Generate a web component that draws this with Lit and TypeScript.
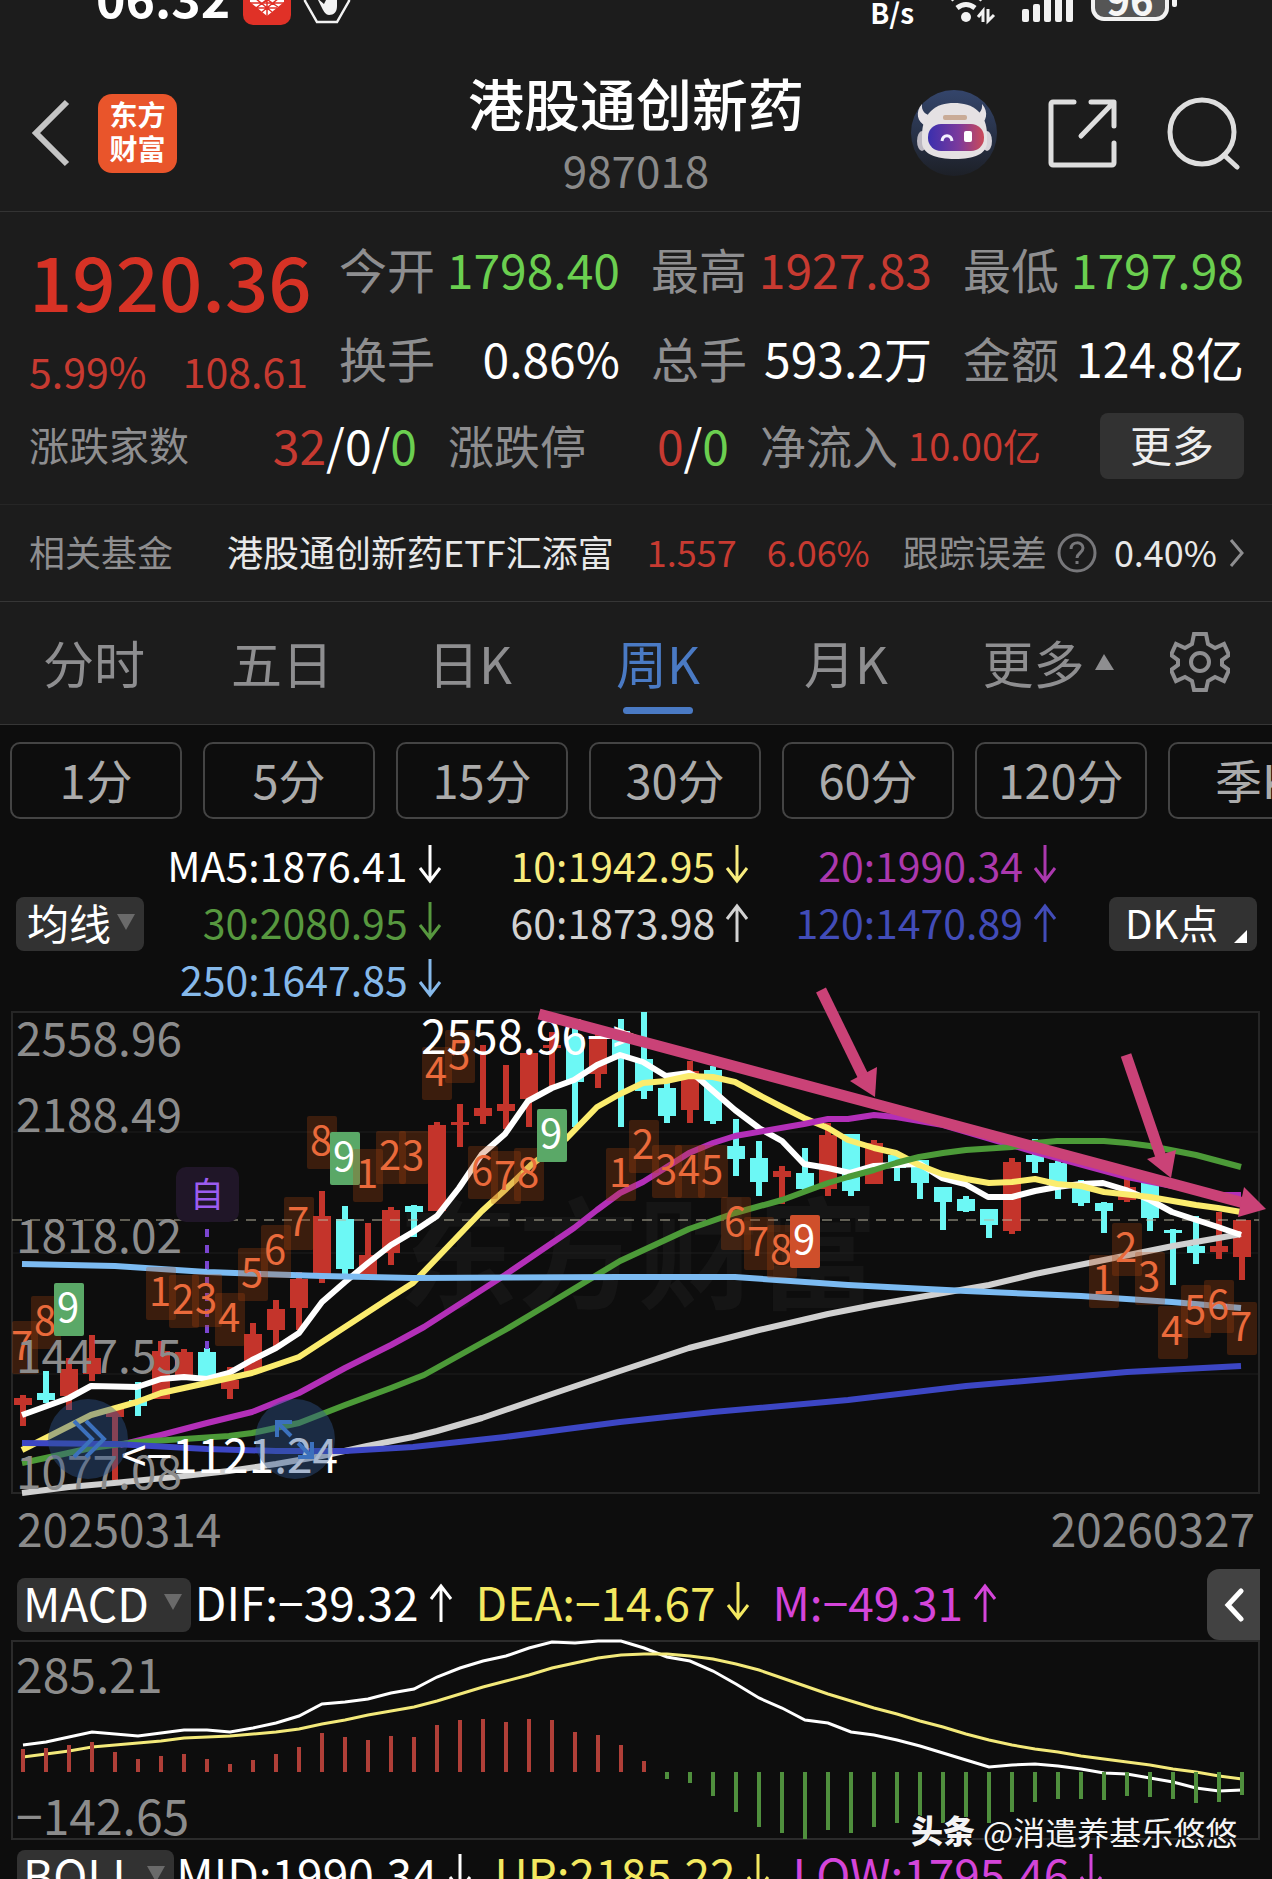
import { LitElement, html, svg, css } from "lit";
import { customElement, property } from "lit/decorators.js";

const fontStack = css`"Noto Sans CJK SC", "Noto Sans", sans-serif`;

type Candle = [high: number, top: number, bottom: number, low: number, dir: "u" | "d"];

const CANDLES: Candle[] = [
  [395, 398, 405, 426, "u"], [371, 393, 400, 403, "d"], [358, 369, 396, 410, "u"], [335, 358, 374, 381, "u"],
  [408, 408, 417, 480, "u"], [382, 400, 406, 416, "d"], [341, 351, 399, 399, "u"], [349, 352, 378, 378, "u"],
  [348, 352, 376, 376, "d"], [367, 380, 389, 399, "u"], [323, 334, 373, 373, "u"], [300, 309, 330, 347, "u"],
  [272, 279, 308, 330, "u"], [191, 216, 276, 283, "u"], [206, 219, 269, 276, "d"], [223, 255, 275, 275, "u"],
  [207, 210, 253, 265, "u"], [205, 206, 212, 237, "d"], [122, 125, 211, 211, "u"], [104, 122, 125, 147, "u"],
  [45, 108, 116, 124, "u"], [65, 104, 111, 129, "u"], [50, 53, 99, 127, "u"], [32, 45, 48, 87, "u"],
  [28, 37, 82, 127, "d"], [33, 37, 74, 88, "u"], [19, 31, 57, 127, "d"], [12, 59, 91, 99, "d"],
  [75, 88, 116, 123, "d"], [61, 71, 110, 123, "u"], [66, 70, 121, 124, "d"], [119, 146, 159, 176, "d"],
  [141, 158, 182, 196, "d"], [166, 171, 177, 204, "u"], [148, 173, 189, 190, "d"], [123, 135, 189, 196, "u"],
  [134, 134, 191, 196, "d"], [140, 143, 184, 184, "u"], [152, 155, 168, 181, "d"], [160, 160, 183, 199, "d"],
  [187, 187, 202, 230, "d"], [196, 199, 211, 212, "d"], [209, 209, 225, 238, "d"], [158, 162, 231, 234, "u"],
  [139, 155, 162, 173, "d"], [161, 163, 187, 199, "d"], [180, 187, 203, 206, "d"], [202, 203, 211, 233, "d"],
  [175, 187, 200, 202, "u"], [182, 182, 218, 231, "d"], [229, 230, 233, 285, "d"], [216, 246, 253, 264, "d"],
  [212, 246, 252, 259, "u"], [220, 220, 257, 280, "u"],
];

const FIRST_X = 23;
const STEP = 23;
const cx = (i: number) => FIRST_X + STEP * i;

const AVERAGES: { name: string; color: string; points: string }[] = [
  { name: "ma60", color: "#d0d0d0", points: "22,493 69,487 114,483 184,476 229,471 276,464 322,456 367,446 413,437 437,431 482,418 552,394 620,371 689,348 759,330 828,314 874,305 943,293 989,285 1035,274 1104,260 1173,246 1241,234" },
  { name: "ma5", color: "#ffffff", points: "22,415 69,398 91,386 137,387 161,379 184,377 207,379 229,373 252,360 276,348 299,333 322,302 345,282 368,263 391,245 413,232 437,216 459,188 482,154 505,134 528,101 552,88 574,80 597,65 620,55 643,62 666,76 689,73 697,77 735,110 759,128 782,141 804,164 828,168 850,173 874,166 895,165 920,164 942,178 965,184 988,197 1012,197 1035,191 1057,187 1081,184 1103,183 1126,190 1150,200 1172,212 1218,227 1241,235" },
  { name: "ma10", color: "#fbec6e", points: "22,450 91,415 137,402 161,393 207,383 252,373 299,357 345,327 391,297 413,283 437,258 482,211 505,190 531,165 567,138 597,107 620,94 643,83 666,81 689,76 713,77 735,82 759,95 782,107 804,118 828,128 848,140 874,148 896,153 919,165 942,174 966,179 989,183 1012,182 1035,179 1057,184 1081,186 1104,192 1150,197 1173,201 1196,205 1218,208 1241,212" },
  { name: "ma20", color: "#b32fb8", points: "120,445 161,435 207,423 252,412 299,393 345,368 391,345 424,327 505,275 574,228 597,210 620,193 643,182 689,153 713,143 735,136 804,124 828,119 848,119 874,115 896,117 943,125 1035,152 1127,177 1218,195 1241,195" },
  { name: "ma30", color: "#4c9a38", points: "22,463 50,457 91,448 137,442 184,439 229,436 252,433 299,423 345,405 391,388 424,375 505,330 552,302 620,261 689,229 735,213 782,200 828,183 848,177 874,170 896,163 919,157 943,153 966,150 1012,147 1035,143 1057,141 1104,141 1127,143 1150,146 1196,155 1241,167" },
  { name: "ma250", color: "#7cbbf2", points: "22,264 115,266 207,272 322,276 413,278 620,277 735,277 848,285 966,291 1081,296 1172,302 1241,308" },
  { name: "ma120", color: "#3c46c4", points: "22,443 115,444 207,449 276,451 345,451 413,447 505,437 620,422 713,412 848,400 966,386 1127,372 1241,366" },
];

/* Sequence counters: candle index, top of the tag, digit, and the tag's kind. */
const COUNTS: [number, number, string, string?][] = [
  [0, 321, "7"], [1, 296, "8"], [2, 283, "9", "buy"], [6, 267, "1"], [7, 275, "2"], [8, 274, "3"], [9, 293, "4"],
  [10, 248, "5"], [11, 225, "6"], [12, 197, "7"], [13, 116, "8"], [14, 132, "9", "buy"], [15, 149, "1"],
  [16, 131, "2"], [17, 131, "3"], [18, 47, "4"], [19, 30, "5"], [20, 146, "6"], [21, 151, "7"], [22, 148, "8"],
  [23, 109, "9", "buy"], [26, 148, "1"], [27, 120, "2"], [28, 145, "3"], [29, 145, "4"], [30, 145, "5"],
  [31, 197, "6"], [32, 217, "7"], [33, 225, "8"], [34, 215, "9", "sell"], [47, 255, "1"], [48, 223, "2"],
  [49, 252, "3"], [50, 306, "4"], [51, 285, "5"], [52, 280, "6"], [53, 302, "7"],
];

const SCALE: [string, number][] = [["2558.96", 56], ["2188.49", 132], ["1818.02", 253], ["1447.55", 373], ["1077.08", 489]];

@customElement("price-chart")
export class PriceChart extends LitElement {
  static styles = css`
    :host { display: block; }
    svg { display: block; width: 100%; overflow: visible; font-family: ${fontStack}; }
    .frame { fill: none; stroke: #262626; stroke-width: 2; }
    .rule { stroke: #1e1e1e; stroke-width: 1; }
    .last { stroke: #b8b39e; stroke-width: 1; stroke-dasharray: 10 8; }
    .mark { fill: #151515; font-size: 120px; font-weight: 700; }
    .u { fill: #c4342b; }
    .d { fill: #6cf8f5; }
    .avg { fill: none; stroke-width: 6; stroke-linejoin: round; }
    .tag { fill: #b4480f; fill-opacity: 0.28; }
    .digit { fill: #ea6a3b; font-size: 40px; text-anchor: middle; }
    .tag.buy { fill: #5aa867; fill-opacity: 1; }
    .tag.sell { fill: #cf4f2b; fill-opacity: 1; }
    .digit.buy, .digit.sell { fill: #fff; }
    .note { fill: #201628; }
    .note-text { fill: #9c5cf0; font-size: 34px; text-anchor: middle; }
    .note-line { stroke: #7a45cf; stroke-width: 4; stroke-dasharray: 8 8; }
    .scale { fill: #8c8c8c; font-size: 46px; }
    .peak { fill: #fff; font-size: 46px; }
    .pad { fill: #2f5590; fill-opacity: 0.42; }
    .glyph { fill: none; stroke: #3c71bd; stroke-width: 4; }
    .trend { stroke: #ca4277; stroke-width: 11; }
    .head { fill: #ca4277; }
  `;

  render() {
    return html`<svg viewBox="0 6 1272 492" role="img" aria-label="周K">
      <text class="mark" x="398" y="300">东方财富</text>
      <rect class="frame" x="12" y="12" width="1247" height="481"></rect>
      ${[132, 253, 374].map((y) => svg`<line class="rule" x1="13" x2="1258" y1=${y} y2=${y}></line>`)}
      ${CANDLES.map(([h, t, b, l, dir], i) => svg`
        <rect class=${dir} x=${cx(i) - 3} y=${h} width="6" height=${l - h}></rect>
        <rect class=${dir} x=${cx(i) - 9} y=${t} width="18" height=${b - t}></rect>`)}
      <line class="last" x1="12" x2="1259" y1="220" y2="220"></line>
      <line class="note-line" x1="207" x2="207" y1="229" y2="349"></line>
      <rect class="note" x="176" y="167" width="63" height="55" rx="10"></rect>
      <text class="note-text" x="207" y="207">自</text>
      ${AVERAGES.map((a) => svg`<polyline class="avg" stroke=${a.color} points=${a.points}></polyline>`)}
      ${COUNTS.map(([i, y, digit, kind = ""]) => svg`
        <rect class="tag ${kind}" x=${Math.max(cx(i) - 15, 12)} y=${y} width=${i ? 30 : 26} height="53" rx="2"></rect>
        <text class="digit ${kind}" x=${cx(i) - 1} y=${y + 39}>${digit}</text>`)}
      ${SCALE.map(([text, y]) => svg`<text class="scale" x="16" y=${y}>${text}</text>`)}
      <text class="peak" x="421" y="54">2558.96−&gt;</text>
      <text class="peak" x="121" y="473">&lt;−1121.24</text>
      <circle class="pad" cx="88" cy="439" r="40"></circle>
      <path class="glyph" d="M74 421l18 18-18 18M86 421l18 18-18 18"></path>
      <circle class="pad" cx="295" cy="439" r="40"></circle>
      <path class="glyph" d="M277 437v-15h15M277 422l14 14M298 457h14v-15M312 457l-14-14"></path>
      <line class="trend" x1="539" y1="14" x2="1244" y2="203"></line>
      <polygon class="head" points="1244,187 1266,209 1238,217"></polygon>
      <line class="trend" x1="821" y1="-10" x2="864" y2="78"></line>
      <polygon class="head" points="877,67 875,97 850,81"></polygon>
      <line class="trend" x1="1126" y1="55" x2="1161" y2="157"></line>
      <polygon class="head" points="1176,150 1171,178 1147,159"></polygon>
    </svg>`;
  }
}

const BARS = [
  109, 108, 105, 102, 112, 119, 116, 114, 119, 124, 120, 114, 107, 93, 97, 100, 96, 97, 85, 80, 79, 82, 79, 80, 92, 95, 105,
  121, 139, 143, 156, 172, 187, 193, 199, 190, 193, 187, 183, 180, 183, 177, 183, 172, 162, 159, 159, 160, 156, 157, 159, 163, 162, 155,
];
const DIF = [
  105, 102, 97, 92, 94, 96, 93, 90, 90, 92, 88, 83, 76, 64, 62, 59, 53, 49, 37, 28, 21, 16, 8, 2, 3, 1, 1,
  8, 17, 21, 31, 44, 58, 68, 80, 83, 92, 95, 100, 106, 113, 120, 127, 125, 124, 126, 129, 133, 134, 138, 142, 148, 151, 150,
];
const DEA = [
  117, 114, 111, 107, 105, 103, 101, 98, 97, 96, 94, 92, 89, 84, 80, 75, 71, 67, 61, 54, 47, 41, 35, 28, 23, 18, 15,
  14, 14, 16, 19, 24, 30, 38, 46, 54, 61, 68, 74, 81, 87, 94, 100, 105, 109, 112, 116, 119, 122, 125, 129, 132, 136, 139,
];
const ZERO = 132;

@customElement("macd-chart")
export class MacdChart extends LitElement {
  static styles = css`
    :host { display: block; }
    svg { display: block; width: 100%; overflow: visible; font-family: ${fontStack}; }
    .frame { fill: none; stroke: #2b2b2b; stroke-width: 2; }
    .pos { fill: #b03f38; }
    .neg { fill: #4f8f3d; }
    .dif, .dea { fill: none; stroke-width: 3; }
    .dif { stroke: #fff; }
    .dea { stroke: #f3e97a; }
    .scale { fill: #8c8c8c; font-size: 48px; }
    .by { fill: #f4f4f4; font-size: 32px; paint-order: stroke; stroke: #0d0d0d; stroke-width: 2; }
    .strong { font-weight: 900; }
  `;

  render() {
    const path = (v: number[]) => v.map((y, i) => `${cx(i)},${y}`).join(" ");
    return html`<svg viewBox="0 0 1272 210" role="img" aria-label="MACD">
      <rect class="frame" x="12" y="1" width="1247" height="198"></rect>
      <text class="scale" x="16" y="53">285.21</text>
      <text class="scale" x="16" y="195">−142.65</text>
      <polyline class="dif" points=${path(DIF)}></polyline>
      <polyline class="dea" points=${path(DEA)}></polyline>
      ${BARS.map((y, i) => y < ZERO
        ? svg`<rect class="pos" x=${cx(i) - 2} y=${y} width="4" height=${ZERO - y}></rect>`
        : svg`<rect class="neg" x=${cx(i) - 2} y=${ZERO} width="4" height=${y - ZERO}></rect>`)}
      <text class="by strong" x="911" y="203">头条</text>
      <text class="by" x="983" y="205">@消遣养基乐悠悠</text>
    </svg>`;
  }
}

@customElement("trend-value")
export class TrendValue extends LitElement {
  @property() dir: "up" | "down" = "down";

  static styles = css`
    :host { display: inline-flex; align-items: center; gap: 9px; white-space: nowrap; }
    svg { flex: none; width: 26px; height: 40px; margin-top: 2px; fill: none; stroke: currentColor; stroke-width: 3; }
  `;

  render() {
    return html`<slot></slot><svg viewBox="0 0 26 40" aria-hidden="true">
      ${this.dir === "up" ? svg`<path d="M13 40V4M3 17L13 4l10 13"></path>` : svg`<path d="M13 0v36M3 23l10 13 10-13"></path>`}
    </svg>`;
  }
}

@customElement("app-root")
export class AppRoot extends LitElement {
  static styles = css`
    :host {
      display: block; height: 100vh; overflow: hidden; background: #0d0d0d; color: #fff;
      font-family: ${fontStack};
    }
    * { box-sizing: border-box; }
    button { font: inherit; color: inherit; background: none; border: 0; padding: 0; margin: 0; cursor: pointer; }
    a { color: inherit; text-decoration: none; }
    svg { display: block; flex: none; }
    .panel { background: #1c1c1c; }
    .red { color: #c73a31; }
    .green { color: #6bcf50; }
    .muted { color: #8e8e90; }

    .status { display: flex; justify-content: space-between; height: 46px; padding: 0 93px 0 96px; overflow: hidden; }
    .status-side { display: flex; align-items: flex-start; }
    .clock { font-size: 50px; font-weight: 700; line-height: 64px; margin-top: -36px; }
    .app-mark { margin: 0 12px 0 13px; }
    .rate { font-size: 28px; font-weight: 700; line-height: 24px; margin-right: 34px; }
    .wifi { margin-right: 26px; }
    .signal { margin-right: 18px; }

    .nav { display: grid; grid-template-columns: 1fr auto 1fr; align-items: center; padding: 17px 31px 8px; border-bottom: 1px solid #333; }
    .nav-left { display: flex; align-items: center; gap: 27px; }
    .nav-right { display: flex; align-items: center; justify-content: flex-end; gap: 50px; }
    .logo { display: grid; place-content: center; width: 79px; height: 79px; padding-bottom: 4px; border-radius: 14px; background: #e9552b; font-size: 28px; font-weight: 700; line-height: 34px; text-align: center; }
    .heading { text-align: center; }
    h1 { margin: 0; padding-top: 4px; font-size: 56px; font-weight: 500; line-height: 70px; }
    .code { font-size: 44px; line-height: 64px; padding-bottom: 2px; color: #8a8a8a; }

    .quote { padding: 12px 28px 14px 29px; }
    .figures { display: grid; grid-template-columns: 278fr repeat(3, 280fr); column-gap: 31px; grid-auto-rows: 89px; }
    .figures > div, .breadth > div { display: flex; align-items: center; justify-content: space-between; min-width: 0; white-space: nowrap; }
    .figures > div { padding-bottom: 2px; font-size: 48px; }
    .figures > .last-price { grid-row: span 2; flex-direction: column; align-items: stretch; justify-content: flex-start; }
    .price { font-size: 76px; font-weight: 500; line-height: 110px; color: #d63225; text-align: center; }
    .change { display: flex; justify-content: space-between; font-size: 41px; line-height: 72px; }
    .breadth { display: grid; grid-template-columns: 388fr 281fr 281fr 172fr; column-gap: 31px; height: 88px; }
    .breadth > div { padding-bottom: 4px; font-size: 48px; }
    .breadth .label { font-size: 46px; }
    .breadth .small { font-size: 40px; }
    .breadth .tiny { font-size: 38px; }
    .breadth > .more-cell { justify-content: flex-end; padding-bottom: 0; }
    .more { width: 144px; height: 66px; padding-bottom: 4px; line-height: 62px; border-radius: 8px; background: #323232; color: #eee; font-size: 42px; }

    .fund { display: flex; align-items: center; justify-content: space-between; height: 98px; padding: 0 28px 4px 29px; border-top: 1px solid #262626; border-bottom: 1px solid #363636; font-size: 36px; white-space: nowrap; }
    .fund > span { display: flex; align-items: center; }
    .fund-name { gap: 54px; color: #e8e8e8; }
    .fund-price { gap: 30px; }
    .help { margin: 3px 17px 0 10px; }
    .error { color: #e8e8e8; }
    .fund-more { margin: 3px 0 0 12px; }

    .tabs { display: grid; grid-template-columns: repeat(6, 188fr) 144fr; height: 123px; border-bottom: 1px solid #363636; font-size: 51px; color: #8e8e90; }
    .tab { position: relative; line-height: 116px; padding-bottom: 2px; display: flex; justify-content: center; align-items: center; gap: 10px; white-space: nowrap; }
    .tab.more-tab { padding-left: 28px; }
    .tab.on { color: #4a7ac4; }
    .tab.on::after { content: ""; position: absolute; left: 50%; bottom: 10px; width: 70px; height: 7px; margin-left: -35px; border-radius: 4px; background: #4a7ac4; }

    .periods { display: flex; gap: 21px; padding: 17px 0 0 10px; overflow: hidden; }
    .period { flex: none; width: 172px; height: 77px; padding-bottom: 4px; border: 2px solid #444; border-radius: 10px; font-size: 47px; line-height: 68px; color: #ababab; }
    .period.wide { text-align: left; padding-left: 45px; }

    .legend { display: grid; grid-template-columns: 128px 1fr 148px; align-items: center; padding: 16px 15px 0 16px; }
    .values { display: grid; grid-template-columns: 298fr 307fr 307fr; grid-auto-rows: 57px; justify-items: end; padding-right: 51px; font-size: 41px; }
    .chip { display: flex; align-items: center; height: 54px; border-radius: 8px; background: #323232; font-size: 42px; line-height: 54px; white-space: nowrap; }
    .legend .chip { margin-top: 6px; padding-bottom: 3px; }
    .chip-avg { padding-left: 11px; gap: 6px; }
    .chip-dk { padding-left: 16px; font-size: 40px; }
    .chip-dk svg { align-self: flex-end; margin: 0 0 5px 16px; }
    .c5 { color: #fff; } .c10 { color: #f8ec7e; } .c20 { color: #ab38ae; }
    .c30 { color: #57983f; } .c60 { color: #d2d2d2; } .c120 { color: #424cb8; } .c250 { color: #86b9ea; }

    .dates { display: flex; justify-content: space-between; padding: 2px 17px 0; font-size: 46px; line-height: 54px; color: #8a8a8a; }
    .indicator { display: flex; align-items: center; height: 71px; margin-top: 15px; padding-left: 17px; font-size: 46px; white-space: nowrap; }
    .indicator .chip { padding: 0 9px 6px 6px; gap: 15px; margin-right: 4px; font-size: 46px; }
    .indicator .m { color: #d445da; }
    .indicator .y { color: #f3e860; }
    .run { display: flex; gap: 22px; padding-bottom: 8px; }
    .fold { display: grid; place-items: center; width: 53px; height: 71px; margin: 0 12px 0 auto; border-radius: 12px 0 0 12px; background: #424242; }
    .indicator.cut { height: 54px; margin-top: 0; }
    .indicator.cut .chip { gap: 10px; margin-right: 2px; }
  `;

  private tri(size: number) {
    return html`<svg width=${size} height="16" viewBox="0 0 18 16" aria-hidden="true"><path d="M0 0h18L9 16z" fill="#6a6a6a"></path></svg>`;
  }

  private figure(label: string, value: string, tone = "") {
    return html`<div><span class="muted">${label}</span><span class=${tone}>${value}</span></div>`;
  }

  render() {
    return html`
      <div class="panel">
        <div class="status">
          <div class="status-side">
            <span class="clock">06:32</span>
            <svg class="app-mark" width="48" height="31" viewBox="0 0 48 31" aria-hidden="true">
              <rect y="-17" width="48" height="42" rx="10" fill="#e03127"></rect>
              <path d="M7-2v4L24 16 41 2v-4z" fill="#fff"></path>
              <path d="M12-2l17 14M22-2l13 9M36-2L19 12M26-2L13 8M7 3h34M14 8h20M24-2v18" stroke="#e03127" stroke-width="1.5"></path>
            </svg>
            <svg width="48" height="31" viewBox="0 0 48 31" aria-hidden="true">
              <path d="M2-4V1l12 21h20L46 1v-5" fill="none" stroke="#f2f2f2" stroke-width="2.5"></path>
              <path d="M14-2l7 6 3-6h10v8c0 6-3 9-8 9-3 0-5-3-7-7z" fill="#f2f2f2"></path>
            </svg>
          </div>
          <div class="status-side">
            <span class="rate">B/s</span>
            <svg class="wifi" width="48" height="28" viewBox="0 0 48 28" aria-hidden="true">
              <path d="M3 0Q18-12 34 0" fill="none" stroke="#f2f2f2" stroke-width="4"></path>
              <path d="M9 8Q18 1 27 8" fill="none" stroke="#f2f2f2" stroke-width="5"></path>
              <circle cx="18" cy="17" r="5" fill="#f2f2f2"></circle>
              <path d="M35 22V11l-5 6M40 9v12l6-6" fill="none" stroke="#f2f2f2" stroke-width="3"></path>
            </svg>
            <svg class="signal" width="51" height="24" viewBox="0 0 51 24" fill="#f2f2f2" aria-hidden="true">
              <rect x="0" y="9" width="7" height="13" rx="2"></rect><rect x="11" y="4" width="7" height="18" rx="2"></rect>
              <rect x="22" y="-4" width="7" height="26" rx="2"></rect><rect x="33" y="-4" width="7" height="26" rx="2"></rect>
              <rect x="44" y="-4" width="7" height="26" rx="2"></rect>
            </svg>
            <svg width="88" height="24" viewBox="0 0 88 24" aria-label="96">
              <rect x="2" y="-24" width="74" height="43" rx="11" fill="#555" stroke="#f2f2f2" stroke-width="4"></rect>
              <rect x="81" y="-10" width="5" height="17" rx="2" fill="#f2f2f2"></rect>
              <text x="39" y="15" font-size="40" font-weight="700" fill="#f6f6f6" text-anchor="middle">96</text>
            </svg>
          </div>
        </div>

        <header class="nav">
          <div class="nav-left">
            <button aria-label="返回">
              <svg width="40" height="68" viewBox="0 0 40 68"><path d="M36 3L5 34l31 31" fill="none" stroke="#c4c4c4" stroke-width="6"></path></svg>
            </button>
            <div class="logo"><span>东方</span><span>财富</span></div>
          </div>
          <div class="heading">
            <h1>港股通创新药</h1>
            <div class="code">987018</div>
          </div>
          <div class="nav-right">
            <button aria-label="助手">
              <svg width="88" height="88" viewBox="0 0 88 88">
                <defs>
                  <linearGradient id="sky" x2="0" y2="1"><stop stop-color="#34456b"></stop><stop offset="1" stop-color="#1d2027"></stop></linearGradient>
                  <linearGradient id="visor"><stop stop-color="#3a2fae"></stop><stop offset=".55" stop-color="#7c3a9c"></stop><stop offset="1" stop-color="#cc4a58"></stop></linearGradient>
                </defs>
                <circle cx="44" cy="44" r="43" fill="url(#sky)"></circle>
                <path d="M12 15c-7 8-5 18 4 22l9-11c-8 2-14-3-13-11zM72 15c7 8 5 18-4 22l-9-11c8 2 14-3 13-11z" fill="#e6e2e6"></path>
                <ellipse cx="12" cy="52" rx="5" ry="10" fill="#bdb9c2"></ellipse><ellipse cx="77" cy="52" rx="5" ry="10" fill="#d6d2d8"></ellipse>
                <path d="M12 46c0-10 3-18 9-24 6-6 14-8 23-8s18 2 24 8c6 6 9 14 9 24v7c0 12-13 17-32 17S12 65 12 53z" fill="#e5e1e3"></path>
                <rect x="33" y="26" width="24" height="5" rx="2" fill="#c9ab97"></rect>
                <rect x="18" y="35" width="56" height="27" rx="13" fill="url(#visor)"></rect>
                <path d="M32 52c1-7 9-7 10 0" fill="none" stroke="#f4f0ff" stroke-width="3"></path>
                <rect x="54" y="42" width="8" height="11" rx="2" fill="#fff"></rect>
              </svg>
            </button>
            <button aria-label="分享">
              <svg width="69" height="69" viewBox="0 0 69 69" fill="none" stroke="#dedede" stroke-width="5" stroke-linecap="round" stroke-linejoin="round">
                <path d="M26 3H5a2 2 0 0 0-2 2v59a2 2 0 0 0 2 2h59a2 2 0 0 0 2-2V44M43 3h23v24M65 4L33 37"></path>
              </svg>
            </button>
            <button aria-label="搜索">
              <svg width="74" height="74" viewBox="0 0 74 74" fill="none" stroke="#dedede" stroke-width="5" stroke-linecap="round">
                <circle cx="35" cy="36" r="32"></circle><path d="M57 59l13 12"></path>
              </svg>
            </button>
          </div>
        </header>

        <section class="quote">
          <div class="figures">
            <div class="last-price">
              <span class="price">1920.36</span>
              <span class="change red"><span>5.99%</span><span>108.61</span></span>
            </div>
            ${this.figure("今开", "1798.40", "green")}
            ${this.figure("最高", "1927.83", "red")}
            ${this.figure("最低", "1797.98", "green")}
            ${this.figure("换手", "0.86%")}
            ${this.figure("总手", "593.2万")}
            ${this.figure("金额", "124.8亿")}
          </div>
          <div class="breadth">
            <div><span class="muted small">涨跌家数</span><span><span class="red">32</span>/0/<span class="green">0</span></span></div>
            <div><span class="muted label">涨跌停</span><span><span class="red">0</span>/<span class="green">0</span></span></div>
            <div><span class="muted label">净流入</span><span class="red tiny">10.00亿</span></div>
            <div class="more-cell"><button class="more">更多</button></div>
          </div>
        </section>

        <a class="fund" href="#fund">
          <span class="fund-name"><span class="muted">相关基金</span><span>港股通创新药ETF汇添富</span></span>
          <span class="fund-price red"><span>1.557</span><span>6.06%</span></span>
          <span>
            <span class="muted">跟踪误差</span>
            <svg class="help" width="40" height="40" viewBox="0 0 40 40" fill="none" stroke="#77777a" stroke-width="3" aria-hidden="true">
              <circle cx="20" cy="20" r="18"></circle><path d="M14 16c0-8 12-8 12-1 0 5-6 5-6 10M20 28v3"></path>
            </svg>
            <span class="error">0.40%</span>
            <svg class="fund-more" width="15" height="28" viewBox="0 0 15 28" fill="none" stroke="#8e8e90" stroke-width="3" aria-hidden="true"><path d="M2 1l11 13L2 27"></path></svg>
          </span>
        </a>

        <nav class="tabs">
          <button class="tab">分时</button>
          <button class="tab">五日</button>
          <button class="tab">日K</button>
          <button class="tab on">周K</button>
          <button class="tab">月K</button>
          <button class="tab more-tab">更多<svg width="19" height="16" viewBox="0 0 19 16"><path d="M0 16L9 0l10 16z" fill="#8e8e90"></path></svg></button>
          <button class="tab" aria-label="设置">
            <svg width="60" height="60" viewBox="0 0 60 60" fill="none" stroke="#8e8e90" stroke-width="4" stroke-linejoin="miter">
              <path d="M24 2h12l2 10 7 4 9-4 5 11-7 5v5l7 5-5 11-9-4-7 4-2 9H24l-2-9-7-4-9 4-5-11 7-5v-5l-7-5 5-11 9 4 7-4z"></path>
              <circle cx="30" cy="30" r="9"></circle>
            </svg>
          </button>
        </nav>
      </div>

      <div class="periods">
        ${["1分", "5分", "15分", "30分", "60分", "120分"].map((p) => html`<button class="period">${p}</button>`)}
        <button class="period wide">季K</button>
      </div>

      <section class="legend">
        <button class="chip chip-avg">均线${this.tri(18)}</button>
        <div class="values">
          <trend-value class="c5">MA5:1876.41</trend-value>
          <trend-value class="c10">10:1942.95</trend-value>
          <trend-value class="c20">20:1990.34</trend-value>
          <trend-value class="c30">30:2080.95</trend-value>
          <trend-value class="c60" dir="up">60:1873.98</trend-value>
          <trend-value class="c120" dir="up">120:1470.89</trend-value>
          <trend-value class="c250">250:1647.85</trend-value>
        </div>
        <button class="chip chip-dk">DK点<svg width="13" height="13" viewBox="0 0 13 13"><path d="M13 0v13H0z" fill="#fff"></path></svg></button>
      </section>

      <price-chart></price-chart>
      <div class="dates"><span>20250314</span><span>20260327</span></div>

      <div class="indicator">
        <button class="chip">MACD${this.tri(18)}</button>
        <div class="run">
          <trend-value dir="up">DIF:−39.32</trend-value>
          <trend-value class="y">DEA:−14.67</trend-value>
          <trend-value class="m" dir="up">M:−49.31</trend-value>
        </div>
        <button class="fold" aria-label="展开">
          <svg width="20" height="34" viewBox="0 0 20 34"><path d="M17 3L4 17l13 14" fill="none" stroke="#fff" stroke-width="5" stroke-linecap="round"></path></svg>
        </button>
      </div>
      <macd-chart></macd-chart>

      <div class="indicator cut">
        <button class="chip">BOLL${this.tri(18)}</button>
        <div class="run">
          <trend-value>MID:1990.34</trend-value>
          <trend-value class="y">UP:2185.22</trend-value>
          <trend-value class="m">LOW:1795.46</trend-value>
        </div>
      </div>
    `;
  }
}
